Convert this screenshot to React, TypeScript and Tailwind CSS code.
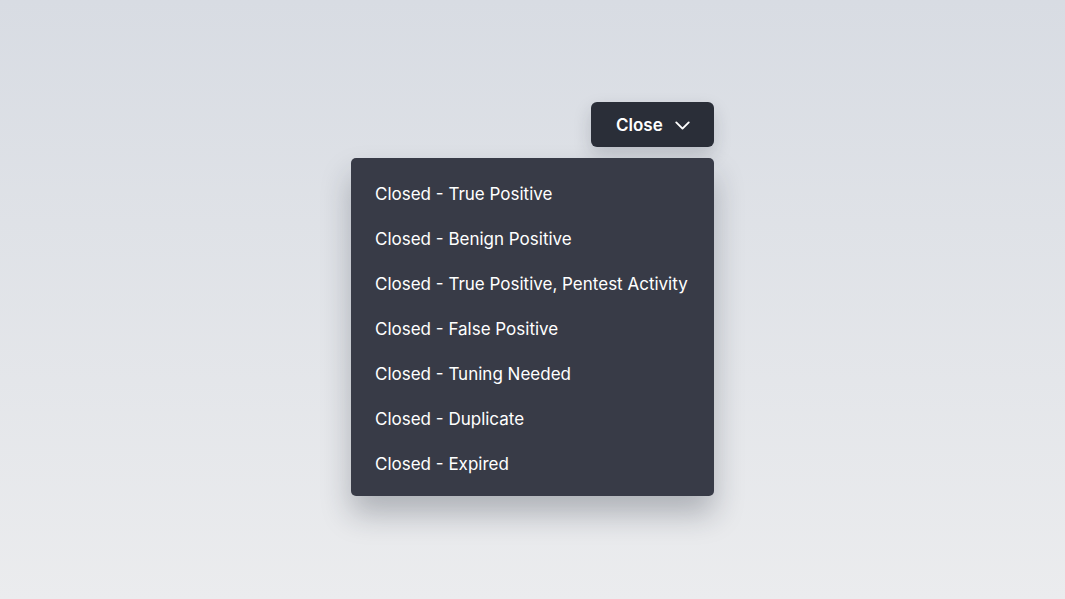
import { ChevronDown } from "lucide-react";

const options = [
  "Closed - True Positive",
  "Closed - Benign Positive",
  "Closed - True Positive, Pentest Activity",
  "Closed - False Positive",
  "Closed - Tuning Needed",
  "Closed - Duplicate",
  "Closed - Expired",
];

export default function App() {
  return (
    <main
      className="min-h-screen w-full bg-gradient-to-b from-[#d8dce3] to-[#ebecee] pt-[102px]"
      style={{ fontFamily: "Inter, 'Noto Sans', sans-serif" }}
    >
      <div className="ml-[351px] flex w-[363px] flex-col items-end">
        {/* TRIGGER */}
        <button className="flex h-[45px] w-[123px] items-center gap-[7px] rounded-[6px] bg-[#2a2e38] pl-[25px] pt-[2px] text-[17px] font-semibold text-white shadow-[0_8px_18px_rgba(30,35,50,0.18)]">
          Close
          <ChevronDown size={25} strokeWidth={1.8} />
        </button>

        {/* MENU */}
        <div className="mt-[11px] w-full rounded-[5px] bg-[#383b47] pt-[14px] pb-[9px] shadow-[0_18px_30px_rgba(30,35,50,0.28)]">
          {options.map((o) => (
            <div
              key={o}
              className="flex h-[45px] items-center px-[24px] text-[17px] text-white"
            >
              {o}
            </div>
          ))}
        </div>
      </div>
    </main>
  );
}
